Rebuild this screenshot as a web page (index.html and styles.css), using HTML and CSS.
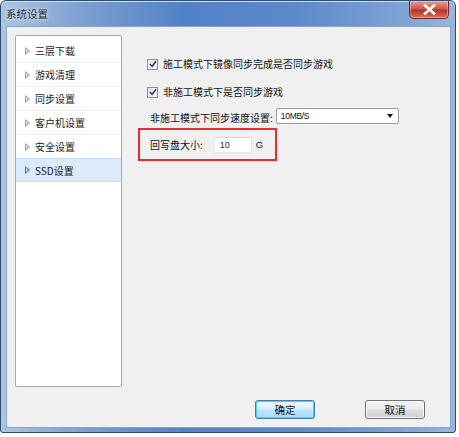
FILE: index.html
```html
<!DOCTYPE html>
<html lang="zh">
<head>
<meta charset="utf-8">
<title>系统设置</title>
<link rel="stylesheet" href="styles.css">
</head>
<body>
<div class="window">
  <div class="titlebar">
    <span class="title">系统设置</span>
    <div class="close"><svg width="13" height="11" viewBox="0 0 13 11"><path d="M2 1.5 L11 9.5 M11 1.5 L2 9.5" stroke="#fff" stroke-width="2.6" stroke-linecap="square" fill="none"/></svg></div>
  </div>
  <div class="client">
    <div class="main">
      <ul class="nav">
        <li class="item"><span class="tri"></span>三层下载</li>
        <li class="item"><span class="tri"></span>游戏清理</li>
        <li class="item"><span class="tri"></span>同步设置</li>
        <li class="item"><span class="tri"></span>客户机设置</li>
        <li class="item"><span class="tri"></span>安全设置</li>
        <li class="item selected"><span class="tri"></span>SSD设置</li>
      </ul>
      <div class="content">
        <label class="check row1"><span class="box"><svg width="8" height="8" viewBox="0 0 9 9"><path d="M1 4.5 L3.5 7 L8 1.5" stroke="#21437a" stroke-width="1.9" fill="none"/></svg></span>施工模式下镜像同步完成是否同步游戏</label>
        <label class="check row2"><span class="box"><svg width="8" height="8" viewBox="0 0 9 9"><path d="M1 4.5 L3.5 7 L8 1.5" stroke="#21437a" stroke-width="1.9" fill="none"/></svg></span>非施工模式下是否同步游戏</label>
        <div class="speed">
          <span class="lbl">非施工模式下同步速度设置:</span>
          <div class="select"><span>10MB/S</span><span class="arrow"></span></div>
        </div>
        <div class="redbox">
          <span class="lbl">回写盘大小:</span>
          <div class="input">10</div>
          <span class="unit">G</span>
        </div>
      </div>
    </div>
    <div class="footer">
      <button class="btn primary">确定</button>
      <button class="btn">取消</button>
    </div>
  </div>
</div>
</body>
</html>
```
FILE: styles.css
```css
* { box-sizing: border-box; }
html, body { margin: 0; padding: 0; background: #fff; }
body {
  font-family: "Noto Sans CJK SC", "Noto Sans", sans-serif;
  font-size: 10px;
  color: #111;
  width: 459px;
  height: 437px;
  overflow: hidden;
}
.window {
  width: 456px;
  height: 433px;
  border: 1px solid #2d4a72;
  border-radius: 6px 6px 3px 3px;
  padding: 0 4px 5px 5px;
  display: flex;
  flex-direction: column;
  background:
    linear-gradient(90deg, #afc5de 0%, #7c9fd0 18%, #5282c6 40%, #5c89ca 65%, #7ea2d4 88%, #9ab6dc 100%);
  box-shadow: inset 0 1px 0 #d4e3f4;
}
.titlebar {
  height: 25px;
  flex: none;
  display: flex;
  align-items: flex-start;
  justify-content: space-between;
}
.title {
  margin-top: 6px;
  color: #0e1c30;
  font-size: 10.5px;
  line-height: 14px;
  text-shadow: 0 0 4px #e6f0fb, 0 0 2px #e6f0fb;
}
.close {
  width: 40px;
  height: 18px;
  margin-right: 2px;
  border: 1px solid #6b2a2a;
  border-top: none;
  border-radius: 0 0 5px 5px;
  background: linear-gradient(180deg, #e3a096 0%, #d0584c 45%, #b8362b 55%, #d8705c 100%);
  display: flex;
  align-items: center;
  justify-content: center;
  box-shadow: inset 0 0 0 1px rgba(255,255,255,0.35);
}
.client {
  flex: 1;
  background: #f0f0f0;
  border: 1px solid #8aa4c6;
  padding: 8px 0 8px 8px;
  display: flex;
  flex-direction: column;
}
.main {
  display: flex;
  height: 352px;
  flex: none;
}
.nav {
  list-style: none;
  margin: 0;
  padding: 3px 0 0 0;
  width: 107px;
  background: #fff;
  border: 1px solid #a3a8ae;
  border-radius: 2px;
}
.item {
  height: 24px;
  border-bottom: 1px solid #eef1f5;
  display: flex;
  align-items: center;
  padding-left: 9px;
  color: #1a1a1a;
  font-size: 10px;
}
.tri {
  width: 0;
  height: 0;
  border-top: 4px solid transparent;
  border-bottom: 4px solid transparent;
  border-left: 5px solid #9a9a9a;
  margin-right: 5px;
  position: relative;
}
.tri::after {
  content: "";
  position: absolute;
  left: -4px;
  top: -2px;
  border-top: 2px solid transparent;
  border-bottom: 2px solid transparent;
  border-left: 2.5px solid #fff;
}
.selected {
  background: #dcebfb;
  border-top: 1px solid #c6ddf5;
  border-bottom: 1px solid #c6ddf5;
  height: 24px;
  margin-top: -1px;
}
.selected .tri { border-left-color: #3e7bd6; }
.selected .tri::after { border-left-color: #dcebfb; }
.content {
  flex: 1;
  padding-left: 16px;
  display: flex;
  flex-direction: column;
  align-items: flex-start;
}
.check {
  display: flex;
  align-items: center;
  height: 14px;
  line-height: 14px;
  padding-left: 9px;
}
.row1 { margin-top: 22px; }
.row2 { margin-top: 14px; }
.box {
  width: 11px;
  height: 11px;
  border: 1px solid #8e8f8f;
  background: linear-gradient(135deg, #dcdcdc, #fbfbfb);
  margin-right: 5px;
  display: flex;
  align-items: center;
  justify-content: center;
  box-shadow: inset 0 0 0 1px #f4f4f4;
}
.speed {
  margin-top: 9px;
  display: flex;
  align-items: center;
  height: 16px;
  padding-left: 12px;
}
.lbl { line-height: 14px; margin-top: 3px; }
.select {
  margin-left: 3px;
  width: 123px;
  height: 16px;
  background: #fff;
  border: 1px solid #9a9a9a;
  border-radius: 2px;
  display: flex;
  align-items: center;
  justify-content: space-between;
  padding: 0 5px 0 4px;
  font-family: "Liberation Sans", sans-serif;
  font-size: 8.5px;
  letter-spacing: -0.3px;
}
.arrow {
  width: 0;
  height: 0;
  border-left: 3.5px solid transparent;
  border-right: 3.5px solid transparent;
  border-top: 4px solid #111;
}
.redbox {
  margin-top: 4px;
  width: 139px;
  height: 33px;
  border: 2px solid #e92b2b;
  display: flex;
  align-items: center;
  padding-left: 10px;
}
.redbox .lbl { margin-top: 0; }
.input {
  margin-left: 11px;
  width: 38px;
  height: 16px;
  background: #fff;
  border: 1px solid #e6e6e6;
  border-top-color: #d8d8d8;
  font-family: "Liberation Sans", sans-serif;
  font-size: 9px;
  color: #2a2a5a;
  line-height: 14px;
  padding-left: 5px;
}
.unit {
  margin-left: 4px;
  font-family: "Liberation Sans", sans-serif;
  font-size: 9.5px;
}
.footer {
  margin-top: 13px;
  display: flex;
  padding-left: 240px;
}
.btn {
  font-family: "Noto Sans CJK SC", sans-serif;
  font-size: 10.5px;
  color: #111;
  width: 60px;
  height: 19px;
  padding: 0;
  border: 1px solid #707070;
  border-radius: 3px;
  background: linear-gradient(180deg, #f2f2f2 0%, #ebebeb 45%, #dddddd 55%, #cfcfcf 100%);
  box-shadow: inset 0 0 0 1px #fbfbfb;
  line-height: 15px;
}
.btn + .btn { margin-left: 50px; }
.primary {
  border-color: #3c7fb1;
  background: linear-gradient(180deg, #eaf6fd 0%, #d9f0fc 45%, #bee6fd 55%, #a7d9f5 100%);
  box-shadow: inset 0 0 0 1px #48d0f8;
}
```
